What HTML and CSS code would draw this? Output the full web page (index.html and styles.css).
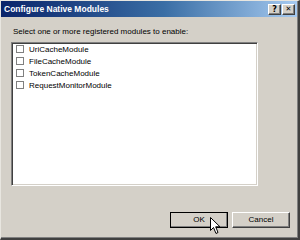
FILE: index.html
```html
<!DOCTYPE html>
<html>
<head>
    <meta charset="utf-8" />
    <title>Configure Native Modules</title>
    <link rel="stylesheet" href="styles.css">
</head>
<body>
    <section id="dialog">
        <header id="titlebar">
            <span class="title">Configure Native Modules</span>
            <span class="capbtns">
                <span class="capbtn">?</span>
                <span class="capbtn close">&#x2715;</span>
            </span>
        </header>
        <section id="content">
            <p class="prompt">Select one or more registered modules to enable:</p>
            <ul id="modules">
                <li><span class="check"></span>UriCacheModule</li>
                <li><span class="check"></span>FileCacheModule</li>
                <li><span class="check"></span>TokenCacheModule</li>
                <li><span class="check"></span>RequestMonitorModule</li>
            </ul>
            <div id="buttons">
                <span class="btn default">OK</span>
                <span class="btn">Cancel</span>
            </div>
        </section>
        <!-- mouse pointer over OK -->
        <svg id="cursor" width="12" height="18" viewBox="0 0 12 18">
            <path d="M0.5 0.5 L0.5 13.5 L3.5 10.5 L6 16.5 L8 15.5 L5.7 9.8 L10 9.8 Z" fill="#fff" stroke="#000" stroke-width="1" stroke-linejoin="miter" />
        </svg>
    </section>
</body>
</html>
```

FILE: styles.css
```css
*{
    padding:0;
    margin:0;
    box-sizing:border-box;
}
body{
    background:#d4d0c8;
    font:8px "Liberation Sans", Arial, sans-serif;
    color:#000;
}
#dialog{
    position:relative;
    width:300px;
    height:240px;
    background:#d4d0c8;
    border-top:1px solid #e8e6e0;
    border-left:1px solid #e8e6e0;
    border-right:2px solid #404040;
    border-bottom:2px solid #404040;
    box-shadow:inset -1px -1px 0 #808080;
    display:flex;
    flex-direction:column;
}
#titlebar{
    height:16px;
    margin:0 1px 0 0;
    background:linear-gradient(to right, #0a246a 0%, #3a6ea5 55%, #a6caf0 100%);
    display:flex;
    align-items:center;
    justify-content:space-between;
    padding:0 2px 0 3px;
}
.title{
    color:#fff;
    font:bold 8.5px "Liberation Sans", Arial, sans-serif;
}
.capbtns{
    display:flex;
    gap:1px;
}
.capbtn{
    width:13px;
    height:11px;
    background:#d4d0c8;
    border-top:1px solid #fff;
    border-left:1px solid #fff;
    border-right:1px solid #404040;
    border-bottom:1px solid #404040;
    box-shadow:inset -1px -1px 0 #808080;
    font:bold 8px "DejaVu Sans", sans-serif;
    line-height:9px;
    text-align:center;
}
.close{
    font-size:7px;
}
#content{
    flex-grow:1;
    padding:0 8px 0 10px;
    display:flex;
    flex-direction:column;
}
.prompt{
    margin:10px 0 0 2px;
    line-height:10px;
}
#modules{
    list-style:none;
    margin-top:5px;
    width:247px;
    height:144px;
    background:#fff;
    border-top:1px solid #808080;
    border-left:1px solid #808080;
    border-right:1px solid #fff;
    border-bottom:1px solid #fff;
    box-shadow:inset 1px 1px 0 #404040, inset -1px -1px 0 #d4d0c8;
    padding:0 2px;
}
#modules li{
    display:flex;
    align-items:center;
    height:12px;
}
.check{
    width:8px;
    height:8px;
    border:1px solid #808080;
    background:#fff;
    margin:0 5px 0 2px;
}
#buttons{
    display:flex;
    justify-content:flex-end;
    gap:4px;
    margin-top:26px;
}
.btn{
    width:58px;
    height:16px;
    background:#d4d0c8;
    border-top:1px solid #fff;
    border-left:1px solid #fff;
    border-right:1px solid #404040;
    border-bottom:1px solid #404040;
    box-shadow:inset -1px -1px 0 #808080;
    text-align:center;
    line-height:14px;
}
.default{
    outline:1px solid #000;
    outline-offset:-1px;
    border-color:#fff #404040 #404040 #fff;
}
#cursor{
    position:absolute;
    left:209px;
    top:216px;
}
```
